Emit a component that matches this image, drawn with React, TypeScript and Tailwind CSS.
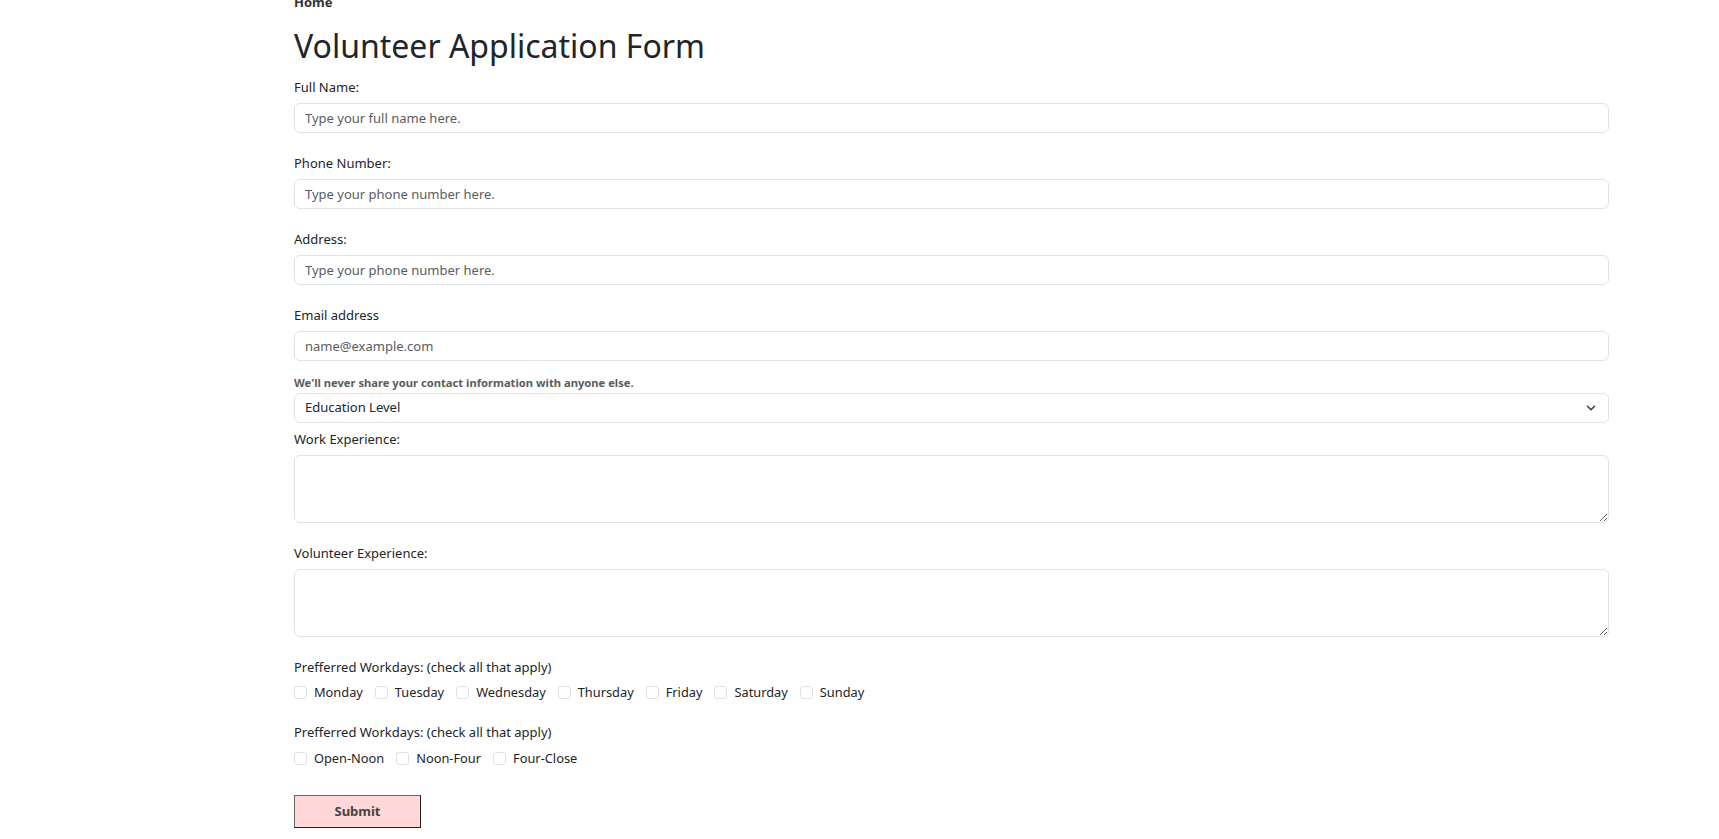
import { ChevronDown } from "lucide-react";

const days = ["Monday", "Tuesday", "Wednesday", "Thursday", "Friday", "Saturday", "Sunday"];
const shifts = ["Open-Noon", "Noon-Four", "Four-Close"];

function Field({ label, placeholder, type = "text" }: { label: string; placeholder: string; type?: string }) {
  return (
    <div className="mb-[20px]">
      <label className="block text-[13px] leading-[21px] text-[#212529]">{label}</label>
      <input
        type={type}
        placeholder={placeholder}
        className="mt-[5px] block h-[30px] w-full rounded-[6px] border border-[#dee2e6] bg-white px-[10px] text-[13px] text-[#212529] outline-none placeholder:text-[#595c5f]"
      />
    </div>
  );
}

function CheckRow({ items, top }: { items: string[]; top: string }) {
  return (
    <div className={`${top} flex items-center gap-[12px]`}>
      {items.map((d) => (
        <label key={d} className="flex items-center gap-[7px] text-[12.8px] leading-[21px] text-[#212529]">
          <input
            type="checkbox"
            className="h-[13px] w-[13px] appearance-none rounded-[3px] border border-[#dee2e6] bg-white"
          />
          {d}
        </label>
      ))}
    </div>
  );
}

export default function App() {
  return (
    <div className="min-h-screen bg-white font-['Noto_Sans',sans-serif]">
      <div className="ml-[294px] mt-[-8px] w-[1315px]">
        <a className="block text-[13px] font-bold leading-[21px] text-[#333]">Home</a>
        <h1 className="mt-[14px] mb-[12px] text-[32px] font-normal leading-[38px] text-[#212529]">
          Volunteer Application Form
        </h1>

        <form onSubmit={(e) => e.preventDefault()}>
          <Field label="Full Name:" placeholder="Type your full name here." />
          <Field label="Phone Number:" placeholder="Type your phone number here." />
          <Field label="Address:" placeholder="Type your phone number here." />

          <div>
            <label className="block text-[13px] leading-[21px] text-[#212529]">Email address</label>
            <input
              type="email"
              placeholder="name@example.com"
              className="mt-[5px] block h-[30px] w-full rounded-[6px] border border-[#dee2e6] bg-white px-[10px] text-[13px] text-[#212529] outline-none placeholder:text-[#595c5f]"
            />
            <p className="mt-[14px] text-[11.2px] font-bold leading-[16px] text-[#595c5f]">
              We'll never share your contact information with anyone else.
            </p>
          </div>

          <div className="relative mt-[2px]">
            <select className="block h-[30px] w-full appearance-none rounded-[6px] border border-[#dee2e6] bg-white px-[10px] text-[13px] text-[#212529] outline-none">
              <option>Education Level</option>
              <option>High School</option>
              <option>Associate</option>
              <option>Bachelor</option>
              <option>Master</option>
            </select>
            <ChevronDown
              size={14}
              strokeWidth={2.5}
              className="pointer-events-none absolute right-[11px] top-[8px] text-[#343a40]"
            />
          </div>

          <div className="mt-[6px] mb-[20px]">
            <label className="block text-[13px] leading-[21px] text-[#212529]">Work Experience:</label>
            <textarea className="mt-[5px] block h-[68px] w-full rounded-[6px] border border-[#dee2e6] bg-white px-[10px] py-[5px] text-[13px] outline-none" />
          </div>

          <div className="mb-[20px]">
            <label className="block text-[13px] leading-[21px] text-[#212529]">Volunteer Experience:</label>
            <textarea className="mt-[5px] block h-[68px] w-full rounded-[6px] border border-[#dee2e6] bg-white px-[10px] py-[5px] text-[13px] outline-none" />
          </div>

          <p className="text-[13px] leading-[21px] text-[#212529]">Prefferred Workdays: (check all that apply)</p>
          <CheckRow items={days} top="mt-[4px]" />

          <p className="mt-[19px] text-[13px] leading-[21px] text-[#212529]">Prefferred Workdays: (check all that apply)</p>
          <CheckRow items={shifts} top="mt-[5px]" />

          <button
            type="submit"
            className="mt-[26px] h-[33px] w-[127px] border border-t-[#666] border-l-[#666] border-b-[#222] border-r-[#222] bg-[#ffd7d9] text-[13px] font-bold text-[#444]"
          >
            Submit
          </button>
        </form>
      </div>
    </div>
  );
}
